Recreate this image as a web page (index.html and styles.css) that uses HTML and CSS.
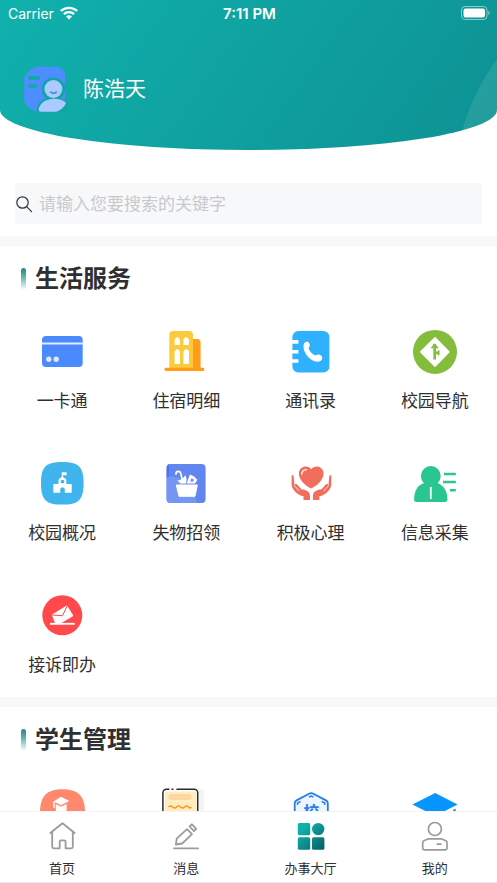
FILE: index.html
```html
<!DOCTYPE html>
<html lang="zh-CN">
<head>
<meta charset="utf-8">
<meta name="viewport" content="width=device-width, initial-scale=1">
<title>办事大厅</title>
<link rel="stylesheet" href="styles.css">
</head>
<body>
<div class="app">
  <main class="content">
    <header class="hero">
      <div class="status">
        <div class="carrier">
          <span>Carrier</span>
          <svg width="18" height="14" viewBox="0 0 18 14" aria-hidden="true" fill="none" stroke="#fff" stroke-width="2.3">
            <path d="M.8 5C5.300.7 12.700.7 17.200 5"/>
            <path d="M3.900 8.200c2.800-2.700 7.400-2.700 10.200 0"/>
            <path d="M6 10.400c1.700-1.600 4.300-1.600 6 0L9 13.400z" fill="#fff" stroke="none"/>
          </svg>
        </div>
        <time class="clock">7:11 PM</time>
        <div class="battery">
          <svg width="30" height="14" viewBox="0 0 30 14" aria-hidden="true">
            <rect x=".5" y=".5" width="25.500" height="13" rx="3.500" fill="none" stroke="#fff" stroke-opacity=".5"/>
            <rect x="2.500" y="2.500" width="21.500" height="9" rx="2" fill="#fff"/>
            <path d="M27.300 5v4c1.800-.5 1.800-3.500 0-4z" fill="#fff" fill-opacity=".5"/>
          </svg>
        </div>
      </div>
      <div class="profile">
        <svg width="48" height="48" viewBox="0 0 48 48" aria-hidden="true">
          <path d="M12.500 1.700h20.500q8 2.300 8 8V34L14 46.700h-2Q4 43.500.2 36.500V12.500Q4 5 12.500 1.700z" fill="#4d8dff"/>
          <circle cx="29.400" cy="24" r="11.600" fill="#10a5a3"/>
          <path d="M12.500 47c-.5-9 7-15 16.500-15 6 0 10 1.500 14 5v10z" fill="#10a5a3"/>
          <path d="M6 13h8.200M6 21.200h5" stroke="#10a9a6" stroke-width="3.800" stroke-linecap="round"/>
          <circle cx="29.400" cy="24" r="9" fill="#abcaff"/>
          <path d="M16.500 46.700c-2.500-.6-2-3.500-.5-6 4-8 20-9.500 26-3-1.500 4-5 7.500-9.500 9z" fill="#abcaff"/>
          <path d="M26.800 27c1.600 1.800 4 1.800 5.500 0" fill="none" stroke="#378cc6" stroke-width="1.500" stroke-linecap="round"/>
        </svg>
        <h1 class="name">陈浩天</h1>
      </div>
    </header>

    <form class="search" role="search">
      <label class="search-box">
        <svg width="18" height="18" viewBox="0 0 18 18" aria-hidden="true" fill="none" stroke="#333" stroke-width="1.200" stroke-linecap="round"><circle cx="7.500" cy="7.500" r="5.700"/><path d="M11.600 11.600l5 5"/></svg>
        <input type="search" placeholder="请输入您要搜索的关键字" aria-label="搜索">
      </label>
    </form>

    <section class="section">
      <h2 class="title">生活服务</h2>
      <div class="grid">
        <a class="item" href="#">
          <svg viewBox="0 0 48 48" aria-hidden="true"><rect x="4" y="8" width="40.700" height="31" rx="4" fill="#4b89ff"/><path d="M4 15.600h40.700" stroke="#e4edff" stroke-width="2"/><circle cx="10.800" cy="31.300" r="2.700" fill="#dce8ff"/><circle cx="18.200" cy="31.300" r="2.700" fill="#dce8ff"/></svg>
          <span>一卡通</span>
        </a>
        <a class="item" href="#">
          <svg viewBox="0 0 48 48" aria-hidden="true"><path d="M29 11h6q3.600 0 3.600 4v26H29z" fill="#ff9d18"/><path d="M7.300 40V7q0-4 4-4H27q4 0 4 4v33z" fill="#fccb3c"/><rect x="2.600" y="39.700" width="39.600" height="3.200" rx="1" fill="#ff9d18"/><path d="M12.600 17v-5.500q2.700-5 5.400 0V17zM21.400 17v-5.500q2.800-5 5.600 0V17zM12.600 36V23.500q2.700-5 5.400 0V36zM21.400 36V23.500q2.800-5 5.600 0V36z" fill="#fff"/></svg>
          <span>住宿明细</span>
        </a>
        <a class="item" href="#">
          <svg viewBox="0 0 48 48" aria-hidden="true"><rect x="5.400" y="3" width="37" height="41.500" rx="6" fill="#2fb1ff"/><path d="M5 12h6.400v3.700H5zM5 22h6.400v3.600H5zM5 31.200h6.400v3.600H5z" fill="#fff"/><path d="M17 15.500c1.500-2.200 4.200-2.200 5.200-.3 1 1.800.8 3.200-.7 4.700 1 3.300 3.500 6 7.200 7.600 1.600-1.300 3.400-1.400 5-.2 2.200 1.500 2 3.900.1 5.400-2.100 1.600-5.700 1.300-9.700-1.200-5.300-3.600-9-10.800-7.100-16z" fill="#fff"/></svg>
          <span>通讯录</span>
        </a>
        <a class="item" href="#">
          <svg viewBox="0 0 48 48" aria-hidden="true"><circle cx="24" cy="23.900" r="22" fill="#84bc3c"/><path d="M24 9.800L37.900 23.900 24 38.200 9.800 23.900z" fill="#fff" stroke="#fff" stroke-width="1.500" stroke-linejoin="round"/><path d="M23.700 16v15.500M23.700 24.800h4.600" fill="none" stroke="#84bc3c" stroke-width="2.700"/><path d="M27.600 22.200v5.200" stroke="#84bc3c" stroke-width="1.600"/><path d="M19.500 20.200l4.200-5 4.200 5z" fill="#84bc3c"/></svg>
          <span>校园导航</span>
        </a>
        <a class="item" href="#">
          <svg viewBox="0 0 48 48" aria-hidden="true"><path d="M24.300 2C40 2 45.600 6 45.600 23.200S40 44.600 24.300 44.600 3 40.500 3 23.200 8.600 2 24.300 2z" fill="#40b4ec"/><path d="M15.300 24h5.200v-4.500l3.300-2.700v-4.500h4.800v3H25v1.500l3.300 2.700V24h5.400v8.700h-6.900v-4q-2.300-3-4.600 0v4h-6.900z" fill="#fff"/><circle cx="24.500" cy="21.600" r="1.900" fill="#40b4ec"/></svg>
          <span>校园概况</span>
        </a>
        <a class="item" href="#">
          <svg viewBox="0 0 48 48" aria-hidden="true"><rect x="4.600" y="4" width="39" height="39" rx="4" fill="#6286ef"/><path d="M4.600 17C18 14 32 25 34.500 43H8.600q-4 0-4-4z" fill="#7595f3"/><path d="M4.600 8q0-4 4-4H7v13l-2.400.5z" fill="#4976ea"/><path d="M14.300 25h21L33 36.300H17z" fill="#fff" stroke="#fff" stroke-linejoin="round"/><path d="M14 14.200c-.5-3.600 4.300-3.800 5 0l1.200 5" fill="none" stroke="#fff" stroke-width="1.700" stroke-linecap="round"/><path d="M15.200 20.500c3 .2 7-2.500 8.100-5.500 1.700 3.500 1.700 6.500.2 8.500h-5z" fill="#fff"/><path d="M24.500 23.500l3.500-9 3.600 1.700 3.800 3.500-2.400 3.800z" fill="#fff"/><path d="M29.300 18.200l3 1.500-2 2.300-2-.8z" fill="#6e8ff1"/></svg>
          <span>失物招领</span>
        </a>
        <a class="item" href="#">
          <svg viewBox="0 0 48 48" aria-hidden="true"><path d="M24 28.400C18 25.500 11.900 19.500 11.900 13.700c0-7 8.500-9.400 12.400-4.500 4-5 12.200-2.500 12.200 4.500 0 5.800-6 12-12.500 14.700z" fill="#f06e5b"/><path d="M14.800 14c.1-2.300 1.900-4.200 4.600-4.400" fill="none" stroke="#fff" stroke-width="1.400" stroke-linecap="round"/><g id="hand"><path d="M4.600 16q1-2 2 .2l.8 8.600q1-1.500 2.600-.5l4.300 5c6 .7 8.700 2.700 8.700 7V40h-6.500v-3.800C9.800 35.500 4.600 28 4.600 25z" fill="#f06e5b"/><path d="M7.200 25.200l5 6" stroke="#fff" stroke-width=".8"/></g><use href="#hand" transform="translate(48.900 0) scale(-1 1)"/></svg>
          <span>积极心理</span>
        </a>
        <a class="item" href="#">
          <svg viewBox="0 0 48 48" aria-hidden="true"><circle cx="19.800" cy="15.900" r="9.900" fill="#29c78f"/><path d="M3.100 39.500C3.100 29 8.500 24 14 22.800h11.500c6 1.500 10.900 7.200 10.900 16.700q0 2.500-2.500 2.500H5.600q-2.500 0-2.500-2.500z" fill="#29c78f"/><path d="M19.800 27v12" stroke="#fff" stroke-width="1.800"/><path d="M33 14h11.800M32 22h12.800M39 30.300h5.800" stroke="#29c78f" stroke-width="2.400"/></svg>
          <span>信息采集</span>
        </a>
        <a class="item" href="#">
          <svg viewBox="0 0 48 48" aria-hidden="true"><circle cx="24.300" cy="23.300" r="20" fill="#ff494a"/><path d="M13.700 22.800l14.600-9.100q.8-.2 1.200.5L35 23q.3 1-.5 1.500L23 31.300h-6z" fill="#fff"/><path d="M14 23l10.500.7L29 14.200" fill="none" stroke="#ff494a" stroke-width="1"/><path d="M12 31.800h24.700" stroke="#fff" stroke-width="1.900"/></svg>
          <span>接诉即办</span>
        </a>
      </div>
    </section>

    <section class="section">
      <h2 class="title">学生管理</h2>
      <div class="grid">
        <a class="item" href="#" aria-label="学业">
          <svg viewBox="0 0 48 48" aria-hidden="true"><path d="M24.500.3C40 .3 47 7 47 23.500S40 47 24.500 47 2 40 2 23.500 9 .3 24.500.3z" fill="#ff886d"/><path d="M23 7.800l8.400 4.300L23 16l-7.400-3.600z" fill="#fff"/><path d="M16 12.500v6.500" stroke="#fff" stroke-width="1.500"/><path d="M17.800 14.700l5.200 2.400 5.600-2.600v6q0 5-5.300 5t-5.500-5z" fill="#fff"/><path d="M18 15l5 2.300 5.500-2.500" fill="none" stroke="#ff886d" stroke-width=".8"/></svg>
        </a>
        <a class="item" href="#" aria-label="通知单">
          <svg viewBox="0 0 48 48" aria-hidden="true"><rect x="12" y="0" width="30" height="46" rx="4" fill="#f4f4f4"/><rect x=".9" y=".2" width="34.800" height="46" rx="3.500" fill="#fff" stroke="#292a30" stroke-width="1.500" stroke-dasharray="3 2 2 3 200"/><rect x="3" y="2.500" width="31.500" height="42" rx="2" fill="#ffedbd"/><rect x="6.500" y="5" width="23" height="6" rx="3" fill="#ffd6a0"/><path d="M6.500 18q2-2 4 0t4 0 4 0 4 0 4 0 3 0" fill="none" stroke="#fa982b" stroke-width="1.600"/></svg>
        </a>
        <a class="item" href="#" aria-label="校务">
          <svg viewBox="0 0 48 48" aria-hidden="true"><path d="M22 4.700q2.200-1.200 4.400 0L39 11.400q1.800 1 1.800 3.100v18q0 2-1.800 3l-12.600 7q-2.200 1-4.400 0l-12.500-7q-1.800-1-1.800-3v-18q0-2.100 1.800-3.100z" fill="#edf5ff" stroke="#277ee8" stroke-width="1.800"/><path d="M10.500 16v-2l3-1.500M37.800 16v-2l-3-1.500M22 8l2.200-1 2.200 1" fill="none" stroke="#277ee8" stroke-width="1.400"/><text class="badge" x="24.200" y="29" text-anchor="middle">校</text></svg>
        </a>
        <a class="item" href="#" aria-label="学籍">
          <svg viewBox="0 0 48 48" aria-hidden="true"><path d="M24.200 3.900l22.400 11.500L24.200 27 1.400 15.400z" fill="#0796ff"/><path d="M12 24l12.200 6L37 24v10q-12.500 8-25 0zM42 21l2.700-1.500V32H42z" fill="#0796ff"/></svg>
        </a>
      </div>
    </section>
  </main>

  <nav class="tabs" aria-label="主导航">
    <a class="tab" href="#">
      <svg viewBox="0 0 32 32" aria-hidden="true" fill="none" stroke="#9b9b9b" stroke-width="1.800" stroke-linejoin="round" stroke-linecap="round"><path d="M4.300 13L16.500 3.300 28.700 13M6.200 12v14.800q0 1.500 1.500 1.500h6V22q0-1.700 1.500-1.700h2.900q1.500 0 1.500 1.700v6.300h5.700q1.500 0 1.500-1.500V12"/></svg>
      <span>首页</span>
    </a>
    <a class="tab" href="#">
      <svg viewBox="0 0 32 32" aria-hidden="true" fill="none" stroke="#9b9b9b" stroke-width="1.800" stroke-linejoin="round" stroke-linecap="round"><path d="M4 28.300h24M17 9.200l5 5-9.800 9.300-6.300 1 .8-5.800zM19.600 6.500l2.300-2.200 4.300 4.500-2.200 2.400z"/></svg>
      <span>消息</span>
    </a>
    <a class="tab" href="#" aria-current="page">
      <svg viewBox="0 0 32 32" aria-hidden="true"><defs><linearGradient id="teal" gradientUnits="userSpaceOnUse" x1="8" y1="8" x2="29" y2="30"><stop stop-color="#10b1ad"/><stop offset="1" stop-color="#075e62"/></linearGradient></defs><g fill="url(#teal)"><rect x="2.800" y="3" width="12.400" height="12.200" rx="1.500"/><circle cx="23.200" cy="9.100" r="6.200"/><rect x="2.800" y="17.300" width="12.400" height="12.400" rx="1.500"/><rect x="17" y="17.300" width="12.400" height="12.400" rx="1.500"/></g></svg>
      <span>办事大厅</span>
    </a>
    <a class="tab" href="#">
      <svg viewBox="0 0 32 32" aria-hidden="true" fill="none" stroke="#9b9b9b" stroke-width="1.700" stroke-linejoin="round" stroke-linecap="round"><circle cx="15.900" cy="9" r="6.500"/><path d="M9.500 18.800h12.800l4.500 2q1.200.6 1.200 2v5.500q0 1.500-1.500 1.500H5.200q-1.500 0-1.500-1.500v-5.500q0-1.400 1.200-2zM18.300 24.200h3.600"/></svg>
      <span>我的</span>
    </a>
  </nav>
</div>
</body>
</html>
```
FILE: styles.css
```css
* {
  box-sizing: border-box;
}

body {
  margin: 0;
  background: #fff;
  color: #2f2f2f;
  font-family: Inter, "Noto Sans CJK SC", sans-serif;
}

a {
  color: inherit;
  text-decoration: none;
}

.app {
  display: flex;
  flex-direction: column;
  height: 100vh;
}

.content {
  flex: 1;
  min-height: 0;
  overflow-y: auto;
  scrollbar-width: none;
}

.hero {
  height: 150px;
  color: #fff;
  background:
    radial-gradient(circle at calc(100% + 173px) 188px, #ffffff18 215px, transparent 216px),
    linear-gradient(125deg, #10b1ad, #0e9193);
  border-radius: 0 0 50% 50% / 0 0 40px 40px;
}

.status {
  display: grid;
  grid-template-columns: 1fr auto 1fr;
  align-items: center;
  height: 26px;
  padding: 0 6px 0 8px;
  font-size: 14px;
}

.carrier {
  display: flex;
  align-items: center;
  gap: 6px;
}

.clock {
  font-size: 15px;
  font-weight: 600;
}

.battery {
  display: flex;
  justify-content: flex-end;
}

.profile {
  display: flex;
  align-items: center;
  gap: 11px;
  padding: 39px 24px 0;
}

.name {
  margin: 0;
  font-size: 21px;
  font-weight: 400;
  line-height: 32px;
}

.search {
  padding: 33px 15px 12px;
}

.search-box {
  display: flex;
  align-items: center;
  gap: 6px;
  height: 41px;
  border-radius: 2px;
  background: #f7f8fa;
}

.search-box input {
  flex: 1;
  min-width: 0;
  padding: 0;
  border: 0;
  outline: 0;
  background: none;
  color: inherit;
  font: inherit;
  font-size: 17px;
}

.search-box input::placeholder {
  color: #c8c9cc;
}

.section {
  padding: 15px 0 20px;
  border-top: 10px solid #f7f8fa;
}

.title {
  display: flex;
  align-items: center;
  gap: 9px;
  margin: 0 0 31px;
  padding-left: 21px;
  font-size: 24px;
  line-height: 36px;
}

.title::before {
  content: "";
  width: 5px;
  height: 22px;
  border-radius: 3px;
  background: linear-gradient(#2d807f, #60b2ac 40%, #fff);
}

.grid {
  display: grid;
  grid-template-columns: repeat(4, 1fr);
  row-gap: 47px;
}

.item {
  display: flex;
  flex-direction: column;
  align-items: center;
  gap: 13px;
  font-size: 17px;
  line-height: 24px;
}

.item svg {
  width: 48px;
  height: 48px;
  overflow: visible;
}

.badge {
  fill: #277ee8;
  font-size: 16px;
  font-weight: 700;
}

.tabs {
  display: grid;
  grid-template-columns: repeat(4, 1fr);
  padding: 8px 0 5px;
  border-top: 1px solid #f3f3f5;
  border-bottom: 1px solid #ebebf1;
  background: #fff;
}

.tab {
  display: flex;
  flex-direction: column;
  align-items: center;
  gap: 7px;
  font-size: 13px;
  line-height: 18px;
}

.tab svg {
  width: 32px;
  height: 32px;
}
```
